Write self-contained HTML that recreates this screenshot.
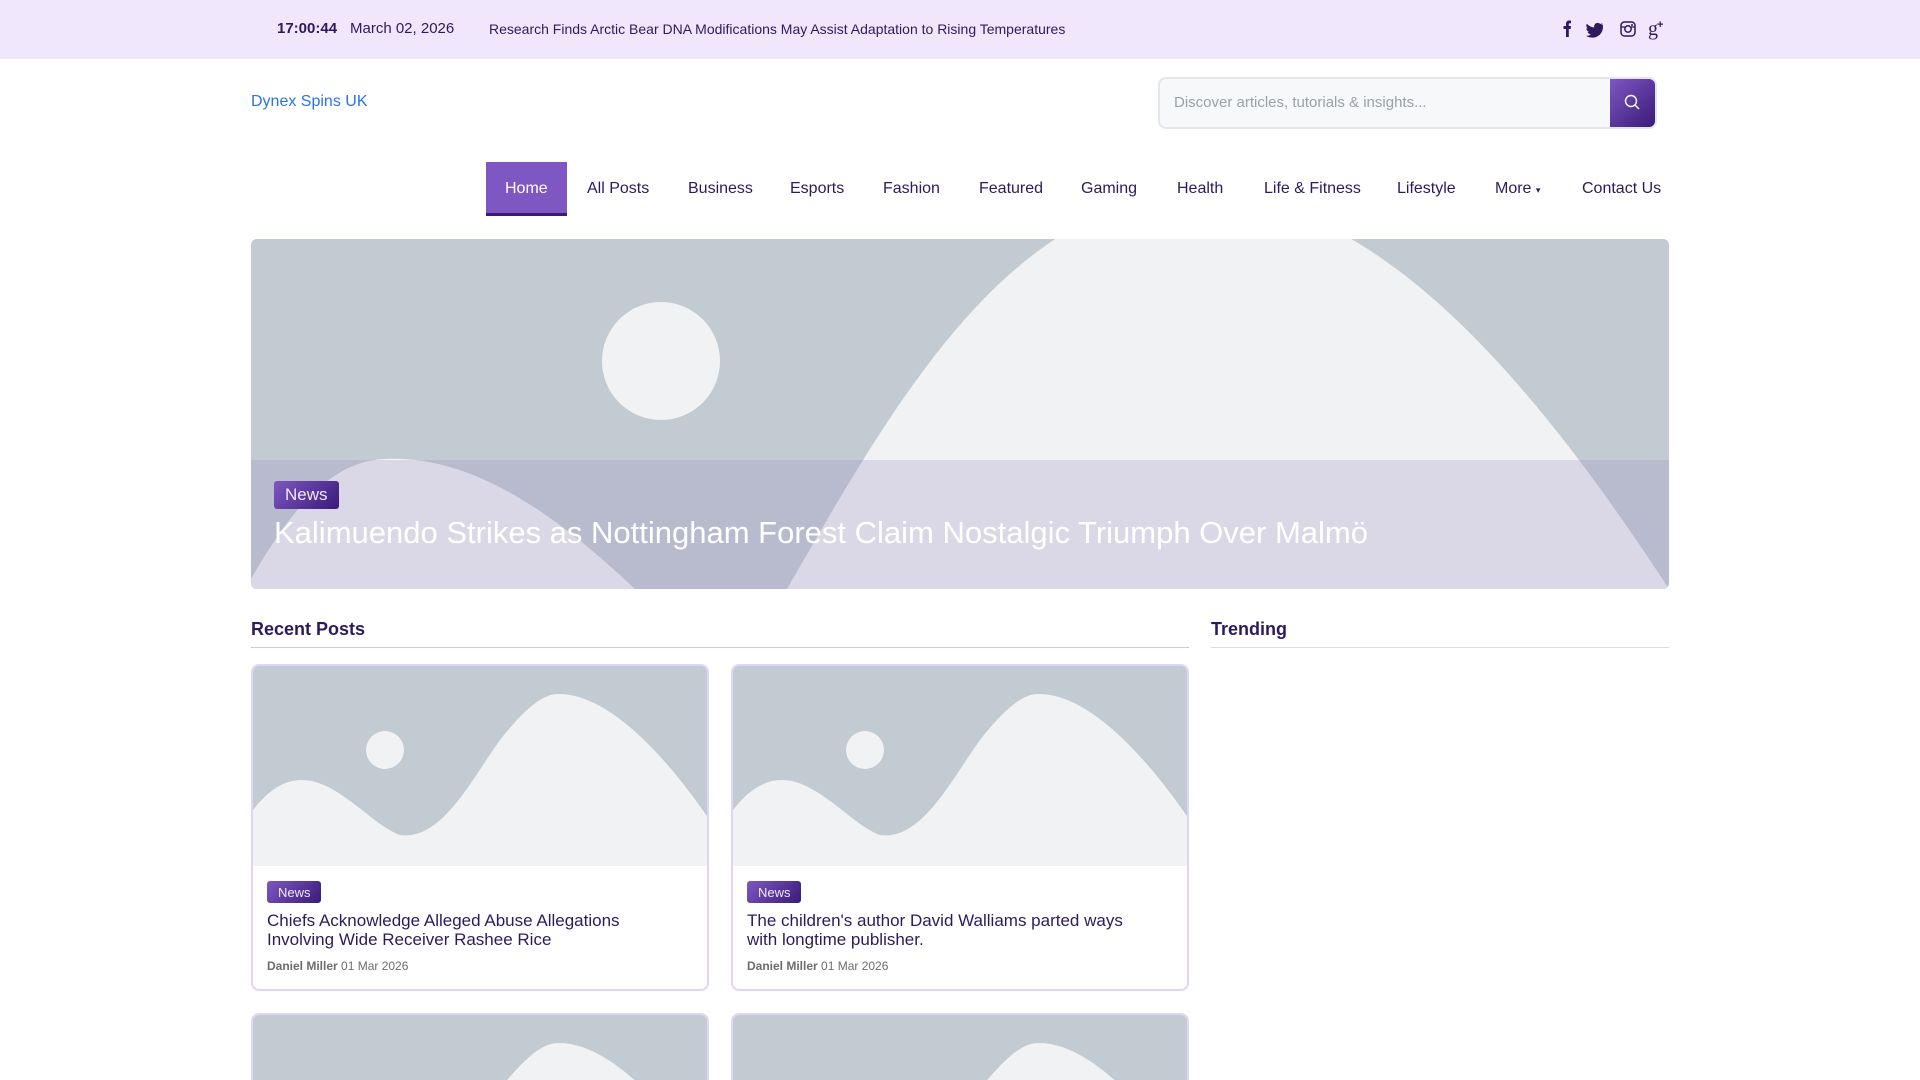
<!DOCTYPE html>
<html style="height:1080px;overflow:hidden"><head><meta charset="utf-8"><style>
*{box-sizing:border-box;margin:0;padding:0}
body{width:1920px;height:1080px;overflow:hidden;background:#fff;font-family:"Liberation Sans",sans-serif;color:#2d1a5e;position:relative}
.top{height:59px;background:#f1e7fd;position:relative;font-size:15px}
.top span{position:absolute;top:20px;color:#2d1a5e}
.logo{position:absolute;left:251px;top:93px;font-size:16px;color:#2a73e8}
.search{position:absolute;left:1158px;top:77px;width:499px;height:52px;border:2px solid #e4e6ea;border-radius:8px;background:#f7f8fa;overflow:hidden}
.search span{position:absolute;left:14px;top:15px;font-size:15px;color:#9aa0a8}
.search .btn{position:absolute;right:0;top:0;width:45px;height:100%;background:linear-gradient(135deg,#7e57c2,#3a1a78)}
.nav{position:absolute;top:162px;height:54px;font-size:16px}
.nav a{position:absolute;top:18px;white-space:nowrap;color:#2d1a5e}
.home{position:absolute;left:486px;top:162px;width:81px;height:54px;background:#7e57c2;border-bottom:3px solid #3a1a78}
.hero{position:absolute;left:251px;top:239px;width:1418px;height:350px;border-radius:6px;overflow:hidden}
.badge{background:linear-gradient(135deg,#7e57c2,#3a1a78);color:#f0eaff;border-radius:3px;position:absolute}
h3{position:absolute;font-size:18px;font-weight:bold;color:#2d1a5e}
.rule{position:absolute;height:1px;background:#d5c3f5;top:647px}
.card{position:absolute;width:458px;border:2px solid #e2d3fb;border-radius:8px;overflow:hidden;background:#fff}
.card.b{border-bottom:none;border-radius:8px 8px 0 0}
.card svg{display:block}
.card .t{position:absolute;left:14px;top:245px;font-size:17px;line-height:19px;color:#2d1a5e;width:420px}
.card .m{position:absolute;left:14px;top:293px;font-size:12px;color:#6c6c6c}
</style></head><body>
<div class="top">
<span style="left:277px;font-weight:bold">17:00:44</span>
<span style="left:350px">March 02, 2026</span>
<span style="left:489px;font-size:14px;top:21px">Research Finds Arctic Bear DNA Modifications May Assist Adaptation to Rising Temperatures</span>
<svg style="position:absolute;left:1557px;top:18px" width="110" height="22" viewBox="0 0 110 22" fill="#2d1a5e">
<path d="M9 19V11H6.5V8H9V6C9 3.8 10.2 2.5 12.4 2.5H14V5.3H12.8C12 5.3 11.8 5.7 11.8 6.3V8H14L13.6 11H11.8V19Z"/>
<path d="M46 6.5C45.3 6.8 44.6 7 43.9 7.1 44.7 6.6 45.2 5.9 45.5 5.1 44.8 5.5 44 5.8 43.2 6 41.8 4.5 39.4 4.6 38 6.1 37.2 7 36.9 8.2 37.2 9.4 34.3 9.2 31.6 7.9 29.8 5.6 28.8 7.3 29.3 9.4 30.9 10.5 30.3 10.5 29.8 10.3 29.3 10.1 29.3 11.8 30.5 13.3 32.2 13.6 31.7 13.8 31.1 13.8 30.5 13.7 31 15.2 32.3 16.2 33.9 16.2 32.5 17.4 30.6 18 28.7 17.8 37.7 23 46.6 16.5 45.9 8.2 46.1 7.6 46 6.5 46Z"/>
<rect x="64" y="4" width="14" height="14" rx="3.5" fill="none" stroke="#2d1a5e" stroke-width="1.5"/><circle cx="71" cy="11" r="3.2" fill="none" stroke="#2d1a5e" stroke-width="1.5"/><circle cx="75" cy="7" r="1"/><path d="M64 9h4M74 9h4" stroke="#2d1a5e" stroke-width="1.2"/>
<text x="91" y="17" font-family="Liberation Serif,serif" font-size="20" fill="#2d1a5e">g</text><text x="100" y="10" font-size="11" font-weight="bold" font-family="Liberation Sans" fill="#2d1a5e">+</text>
</svg>
</div>
<div class="logo">Dynex Spins UK</div>
<div class="search"><span>Discover articles, tutorials &amp; insights...</span><div class="btn"><svg width="45" height="48" viewBox="0 0 45 48"><circle cx="21" cy="22" r="5.5" fill="none" stroke="#fff" stroke-width="1.4"/><path d="M25 26l4 4" stroke="#fff" stroke-width="1.4"/></svg></div></div>
<div class="home"></div>
<div class="nav" style="left:0;width:1920px">
<a style="left:505px;color:#fff">Home</a><a style="left:587px">All Posts</a><a style="left:688px">Business</a><a style="left:790px">Esports</a><a style="left:883px">Fashion</a><a style="left:979px">Featured</a><a style="left:1081px">Gaming</a><a style="left:1177px">Health</a><a style="left:1264px">Life &amp; Fitness</a><a style="left:1397px">Lifestyle</a><a style="left:1495px">More <span style="font-size:9px">▾</span></a><a style="left:1582px">Contact Us</a>
</div>
<div class="hero">
<svg width="1418" height="350" viewBox="0 0 1418 350" style="display:block">
<rect width="1418" height="350" fill="#c2cad2"/>
<circle cx="410" cy="122" r="59" fill="#f1f2f4"/>
<path d="M536 350C640 170 760 -50 955 -45 1140 -40 1300 170 1418 350Z" fill="#f1f2f4"/>
<path d="M0 340C40 270 80 222 134 220 230 215 320 290 384 350H0Z" fill="#f1f2f4"/>
<rect y="221" width="1418" height="129" fill="rgba(158,151,198,0.28)"/>
</svg>
<div class="badge" style="left:23px;top:242px;width:65px;height:28px;font-size:17px;padding:4px 0 0 11px">News</div>
<div style="position:absolute;left:23px;top:276px;font-size:31px;color:#fff;white-space:nowrap">Kalimuendo Strikes as Nottingham Forest Claim Nostalgic Triumph Over Malmö</div>
</div>
<h3 style="left:251px;top:619px">Recent Posts</h3>
<div class="rule" style="left:251px;width:938px"></div>
<h3 style="left:1211px;top:619px">Trending</h3>
<div class="rule" style="left:1211px;width:458px;background:#ddd"></div>

<div class="card" style="left:251px;top:664px;height:327px">
<svg width="458" height="200" viewBox="0 0 458 200"><rect width="458" height="200" fill="#c2cad2"/><circle cx="132" cy="84" r="19" fill="#f1f2f4"/><path d="M0 144C15 125 30 114 49 114 85 114 120 160 147 169 190 175 220 110 250 70 275 40 290 28 306 28 360 28 420 100 458 156V200H0Z" fill="#f1f2f4"/></svg>
<div class="badge" style="left:14px;top:215px;width:54px;height:22px;font-size:13px;padding:4px 0 0 11px">News</div>
<div class="t">Chiefs Acknowledge Alleged Abuse Allegations Involving Wide Receiver Rashee Rice</div>
<div class="m"><b>Daniel Miller</b> 01 Mar 2026</div>
</div>
<div class="card" style="left:731px;top:664px;height:327px">
<svg width="458" height="200" viewBox="0 0 458 200"><rect width="458" height="200" fill="#c2cad2"/><circle cx="132" cy="84" r="19" fill="#f1f2f4"/><path d="M0 144C15 125 30 114 49 114 85 114 120 160 147 169 190 175 220 110 250 70 275 40 290 28 306 28 360 28 420 100 458 156V200H0Z" fill="#f1f2f4"/></svg>
<div class="badge" style="left:14px;top:215px;width:54px;height:22px;font-size:13px;padding:4px 0 0 11px">News</div>
<div class="t" style="width:400px">The children's author David Walliams parted ways with longtime publisher.</div>
<div class="m"><b>Daniel Miller</b> 01 Mar 2026</div>
</div>
<div class="card b" style="left:251px;top:1013px;height:67px">
<svg width="458" height="200" viewBox="0 0 458 200"><rect width="458" height="200" fill="#c2cad2"/><circle cx="132" cy="84" r="19" fill="#f1f2f4"/><path d="M0 144C15 125 30 114 49 114 85 114 120 160 147 169 190 175 220 110 250 70 275 40 290 28 306 28 360 28 420 100 458 156V200H0Z" fill="#f1f2f4"/></svg>
</div>
<div class="card b" style="left:731px;top:1013px;height:67px">
<svg width="458" height="200" viewBox="0 0 458 200"><rect width="458" height="200" fill="#c2cad2"/><circle cx="132" cy="84" r="19" fill="#f1f2f4"/><path d="M0 144C15 125 30 114 49 114 85 114 120 160 147 169 190 175 220 110 250 70 275 40 290 28 306 28 360 28 420 100 458 156V200H0Z" fill="#f1f2f4"/></svg>
</div>
</body></html>
